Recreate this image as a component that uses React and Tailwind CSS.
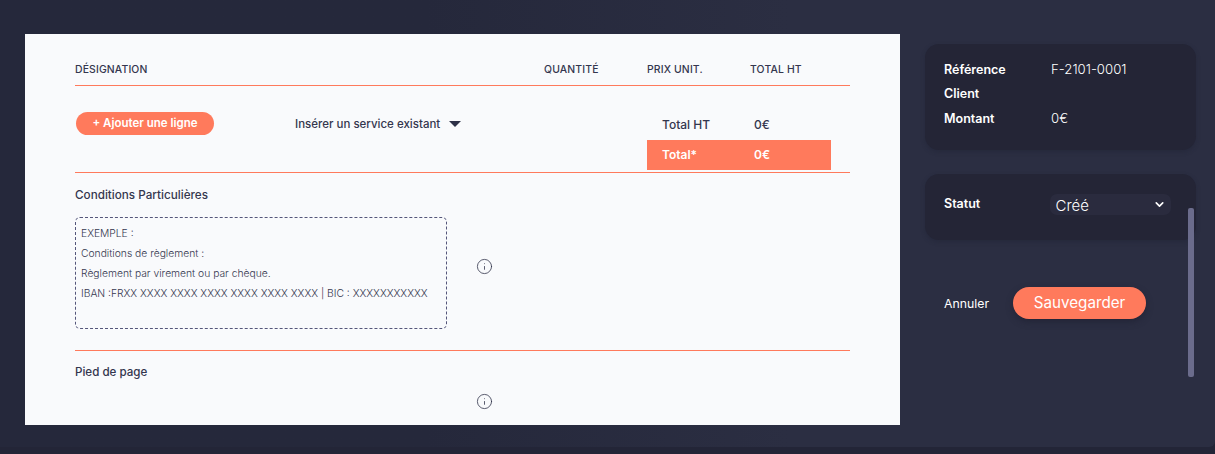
import { ChevronDown, Info } from 'lucide-react';

const font = 'font-["Inter","Noto_Sans",sans-serif]';

function Divider() {
  return <div className="h-px w-full bg-[#ff7a5c]" />;
}

function InfoIcon() {
  return <Info size={17} strokeWidth={1.1} className="text-[#2d3047]" />;
}

function InvoicePage() {
  return (
    <div className="h-[391px] w-[875px] overflow-hidden bg-[#f9fafc] px-[50px] text-[#34364e]">
      {/* Table head */}
      <div className="flex h-[51px] items-end pb-[8px] text-[10.4px] leading-[14px] font-medium tracking-[0.15px]">
        <div className="w-[469px]">DÉSIGNATION</div>
        <div className="w-[103px]">QUANTITÉ</div>
        <div className="w-[103px]">PRIX UNIT.</div>
        <div>TOTAL HT</div>
      </div>
      <Divider />

      {/* Add line + totals */}
      <div className="flex h-[86px]">
        <div className="w-[220px] pt-[26px] pl-px">
          <button className="block h-[23px] w-[138px] rounded-full bg-[#ff7a5c] text-[11.5px] font-semibold text-white">
            + Ajouter une ligne
          </button>
        </div>
        <div className="flex h-[77px] w-[352px] items-center gap-[9px] text-[11.5px] font-medium">
          <span>Insérer un service existant</span>
          <span className="mb-[2px] h-0 w-0 border-x-[6px] border-t-[6px] border-x-transparent border-t-[#2d3047]" />
        </div>
        <div className="w-[184px] pt-[28px] text-[12px] font-medium">
          <div className="flex h-[26px] items-center pb-[5px] pl-[15px]">
            <span className="w-[92px]">Total HT</span>
            <span>0€</span>
          </div>
          <div className="flex h-[30px] items-center bg-[#ff7a5c] pl-[15px] font-semibold text-white">
            <span className="w-[92px]">Total*</span>
            <span>0€</span>
          </div>
        </div>
      </div>
      <Divider />

      {/* Conditions */}
      <div className="pt-[14px] pb-[14px] text-[11.7px] leading-[16px] font-medium">Conditions Particulières</div>
      <div className="flex items-start">
        <div className="h-[112px] w-[372px] rounded-[5px] border border-dashed border-[#55567a] px-[5px] pt-[5px] text-[10.3px] leading-[20px] font-light">
          <div>EXEMPLE :</div>
          <div>Conditions de règlement :</div>
          <div>Règlement par virement ou par chèque.</div>
          <div>IBAN :FRXX XXXX XXXX XXXX XXXX XXXX XXXX | BIC : XXXXXXXXXXX</div>
        </div>
        <div className="mt-[41px] ml-[29px]"><InfoIcon /></div>
      </div>
      <div className="pt-[21px]"><Divider /></div>

      {/* Footer */}
      <div className="pt-[13px] text-[11.6px] leading-[16px] font-medium">Pied de page</div>
      <div className="flex pt-[13px] pl-[401px]"><InfoIcon /></div>
    </div>
  );
}

function Sidebar() {
  return (
    <div className="relative w-[315px] pt-[44px] pl-[25px] text-white">
      <div className="h-[106px] w-[271px] rounded-[14px] bg-[#242536] px-[19px] pt-[14px] shadow-[0_2px_4px_rgba(30,32,48,0.35)]">
        <div className="flex h-[24.5px] items-center">
          <span className="w-[107px] text-[12.5px] font-semibold">Référence</span>
          <span className="text-[13.2px] font-light">F-2101-0001</span>
        </div>
        <div className="flex h-[24.5px] items-center">
          <span className="w-[107px] text-[12.5px] font-semibold">Client</span>
        </div>
        <div className="flex h-[24.5px] items-center">
          <span className="w-[107px] text-[12.5px] font-semibold">Montant</span>
          <span className="text-[13.2px] font-light">0€</span>
        </div>
      </div>

      <div className="mt-[24px] h-[66px] w-[271px] rounded-[14px] bg-[#242536] pt-[20px] pr-[25px] pl-[19px] shadow-[0_2px_4px_rgba(30,32,48,0.35)]">
        <div className="flex items-start">
          <span className="w-[106px] pt-[2px] text-[12.5px] leading-[16px] font-semibold">Statut</span>
          <div className="flex h-[21px] w-[122px] items-center justify-between rounded-[7px] bg-[#2a2b3e] pr-[5px] pl-[6px] text-[15px] font-light">
            <span className="pt-[3px]">Créé</span>
            <ChevronDown size={13} strokeWidth={3} />
          </div>
        </div>
      </div>

      <div className="mt-[47px] flex items-center pl-[19px]">
        <span className="w-[69px] pt-[2px] text-[12.3px] font-normal">Annuler</span>
        <button className="h-[32px] w-[133px] rounded-full bg-[#ff7a5c] text-[15.2px] font-normal text-white shadow-[0_3px_6px_rgba(30,32,48,0.6)]">
          Sauvegarder
        </button>
      </div>

      {/* scrollbar */}
      <div className="absolute top-[208px] left-[288px] h-[169px] w-[6px] rounded-[2px] bg-[#6b6c8c]" />
    </div>
  );
}

export default function App() {
  return (
    <div className={`h-[454px] w-full overflow-hidden bg-[#232537] ${font}`}>
      <div className="flex h-[447px] rounded-br-[6px] bg-gradient-to-r from-[#25283b] from-35% to-[#2b2e42] to-65%">
        <div className="w-[900px] pt-[34px] pl-[25px]">
          <InvoicePage />
        </div>
        <Sidebar />
      </div>
    </div>
  );
}
